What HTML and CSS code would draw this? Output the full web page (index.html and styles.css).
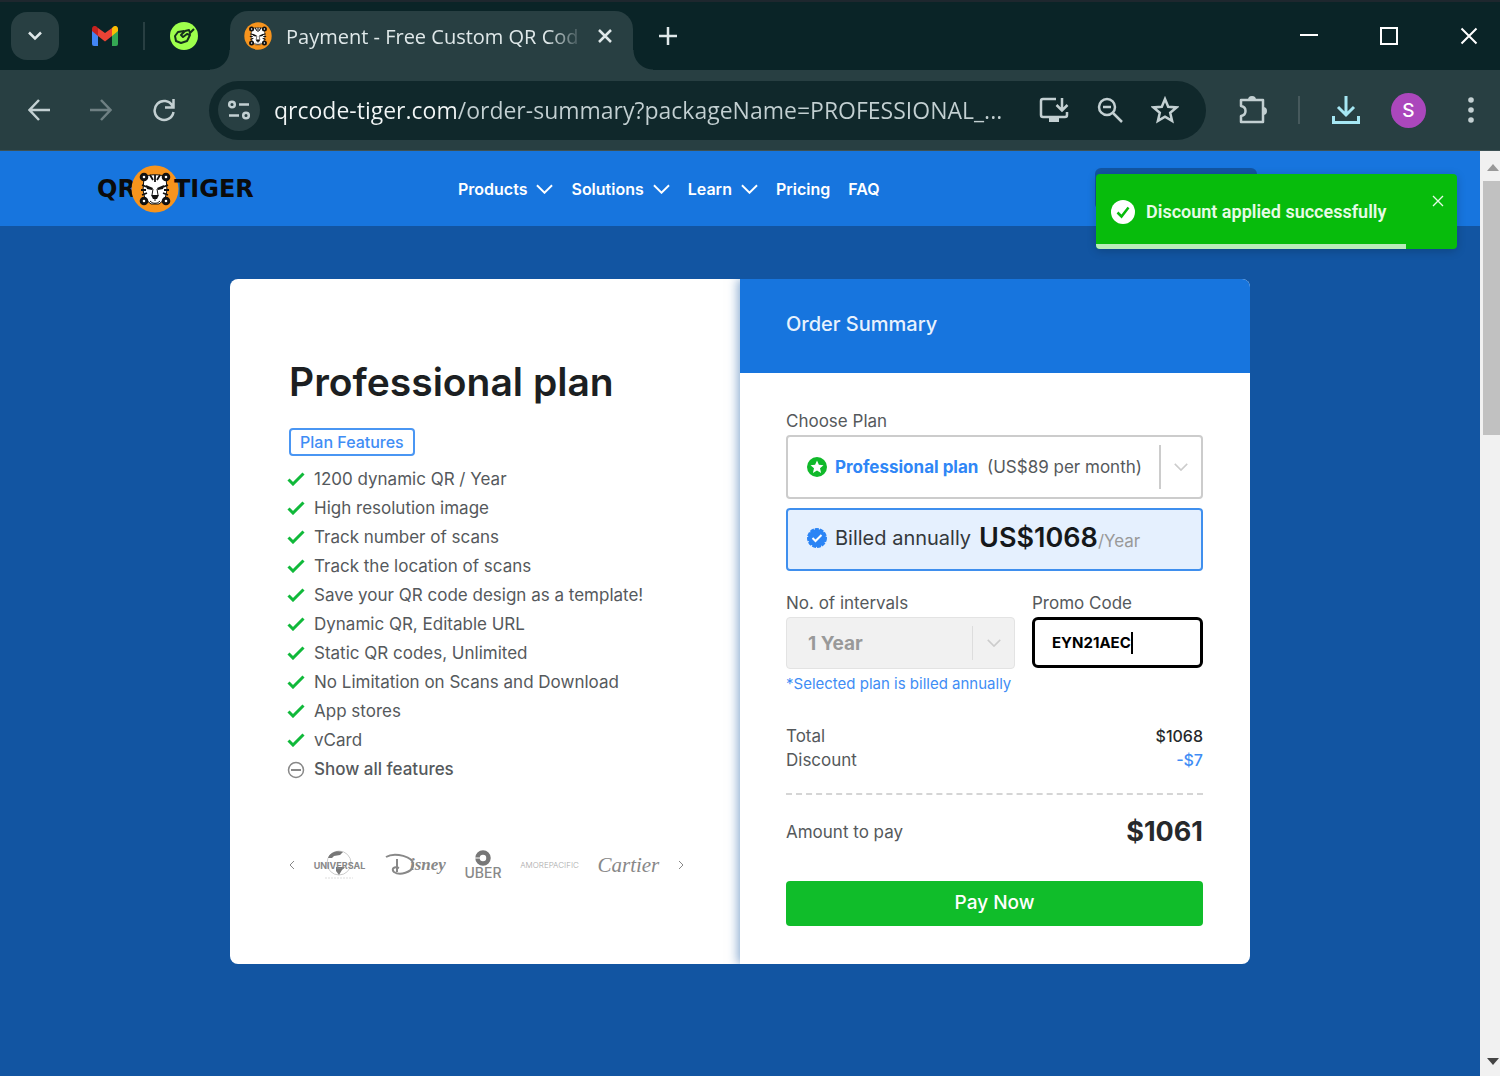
FILE: index.html
```html
<!DOCTYPE html>
<html lang="en">
<head>
    <meta charset="UTF-8">
    <meta name="viewport" content="width=device-width, initial-scale=1.0">
    <title>Payment - Free Custom QR Code</title>
    <link rel="stylesheet" href="styles.css">
</head>
<body>
    <!-- shared icons -->
    <svg class="sprite" aria-hidden="true">
        <symbol id="chevron" viewBox="0 0 18 10"><path d="M1 1l8 8 8-8" fill="none" stroke="currentColor" stroke-width="2"/></symbol>
        <symbol id="check" viewBox="0 0 18 14"><path d="M1.500 7.500l4.500 4.500L16.500 1.500" fill="none" stroke="currentColor" stroke-width="3"/></symbol>
        <symbol id="close" viewBox="0 0 18 18"><path d="M1.500 1.500l15 15M16.500 1.500l-15 15" fill="none" stroke="currentColor" stroke-width="2"/></symbol>
        <symbol id="tiger" viewBox="0 0 48 48">
            <circle cx="24" cy="24" r="23.500" fill="#f7941d"/>
            <path d="M13 12c5-3 17-3 22 0l1 13-2 9-6 5h-8l-6-5-2-9z" fill="#fff" stroke="#111"/>
            <path d="M11 20l5 2M10 25l5 0M11 30l5-2M37 20l-5 2M38 25l-5 0M37 30l-5-2M19 10l3 5M29 10l-3 5M24 10v7" stroke="#111" stroke-width="1.800" fill="none"/>
            <path d="M15 20l7 3-1 2-5-1zM33 20l-7 3 1 2 5-1zM20 30h8l-2 4h-4z" fill="#111"/>
            <path d="M22 24l-1 6M26 24l1 6M24 33v3M19 36c3 3 7 3 10 0" stroke="#111" fill="none"/>
            <g fill="#fff" stroke="#111" stroke-width="3"><circle cx="13" cy="12" r="2.800"/><circle cx="35" cy="12" r="2.800"/><circle cx="13" cy="36" r="2.800"/><circle cx="35" cy="36" r="2.800"/></g>
        </symbol>
    </svg>

    <div class="browser">
        <div class="tabstrip">
            <button class="tab-search" aria-label="Search tabs"><svg width="16" height="10" viewBox="0 0 16 10"><path d="M2 1.500l6 6 6-6" fill="none" stroke="currentColor" stroke-width="2.500"/></svg></button>
            <button class="pinned gmail" aria-label="Gmail">
                <svg width="26" height="20" viewBox="0 0 26 20">
                    <path d="M0 3v15a2 2 0 0 0 2 2h4V8z" fill="#4285f4"/>
                    <path d="M26 3v15a2 2 0 0 1-2 2h-4V8z" fill="#34a853"/>
                    <path d="M20 2v8l6-5V3c0-3-3-4-5-2z" fill="#fbbc04"/>
                    <path d="M6 2v8L0 5V3c0-3 3-4 5-2z" fill="#c5221f"/>
                    <path d="M6 2l7 5 7-5v8l-7 5.500L6 10z" fill="#ea4335"/>
                </svg>
            </button>
            <span class="strip-line"></span>
            <button class="pinned" aria-label="Pinned tab">
                <svg width="28" height="28" viewBox="0 0 28 28">
                    <circle cx="14" cy="14" r="14" fill="#9eff4c"/>
                    <path d="M14 9l-6 1-3 4 1 5 5 2 6-2 3-6-3-1-4 3-2-2 4-4 4-1 1 3 4-4" fill="none" stroke="#14301c" stroke-width="2" stroke-linejoin="round"/>
                </svg>
            </button>
            <div class="tab">
                <svg width="28" height="28"><use href="#tiger"/></svg>
                <span class="tab-title">Payment - Free Custom QR Cod</span>
                <button class="tab-close" aria-label="Close tab"><svg width="14" height="14" viewBox="0 0 14 14"><path d="M1 1l12 12M13 1L1 13" stroke="currentColor" stroke-width="2.500"/></svg></button>
            </div>
            <button class="new-tab" aria-label="New tab"><svg width="18" height="18" viewBox="0 0 18 18"><path d="M9 0v18M0 9h18" stroke="currentColor" stroke-width="2.500"/></svg></button>
            <div class="window-buttons">
                <button aria-label="Minimize"><svg width="18" height="18" viewBox="0 0 18 18"><path d="M0 8h18" stroke="currentColor" stroke-width="2"/></svg></button>
                <button aria-label="Maximize"><svg width="18" height="18" viewBox="0 0 18 18"><path d="M1 1h16v16H1z" fill="none" stroke="currentColor" stroke-width="2"/></svg></button>
                <button aria-label="Close"><svg width="18" height="18"><use href="#close"/></svg></button>
            </div>
        </div>

        <div class="toolbar">
            <button aria-label="Back"><svg width="22" height="22" viewBox="0 0 22 22"><path d="M22 11H2M11 1L1.500 11l9.500 10" fill="none" stroke="currentColor" stroke-width="2.500"/></svg></button>
            <button class="dim" aria-label="Forward"><svg width="22" height="22" viewBox="0 0 22 22"><path d="M0 11h20M11 1l9.500 10-9.500 10" fill="none" stroke="currentColor" stroke-width="2.500"/></svg></button>
            <button aria-label="Reload"><svg width="24" height="24" viewBox="0 0 24 24"><path d="M20.500 8A9.500 9.500 0 1 0 21.500 14M21.500 1v8.500H13" fill="none" stroke="currentColor" stroke-width="2.500"/></svg></button>
            <div class="address">
                <button class="site-info" aria-label="Site information">
                    <svg width="22" height="20" viewBox="0 0 22 20" fill="none" stroke="currentColor" stroke-width="2.500"><circle cx="4" cy="4.500" r="2.800"/><path d="M11 4.500h10M1 15.500h10"/><circle cx="18" cy="15.500" r="2.800"/></svg>
                </button>
                <input type="text" class="url" aria-label="Address" value="qrcode-tiger.com/order-summary?packageName=PROFESSIONAL_...">
                <button aria-label="Install"><svg width="30" height="26" viewBox="0 0 30 26"><path d="M17 2H4a2 2 0 0 0-2 2v14a2 2 0 0 0 2 2h22a2 2 0 0 0 2-2v-3M23 1v11M17.500 8l5.500 5.500L28.500 8" fill="none" stroke="currentColor" stroke-width="2.500"/><path d="M10 20h10v5H10z" fill="currentColor"/></svg></button>
                <button aria-label="Zoom"><svg width="26" height="26" viewBox="0 0 26 26" fill="none" stroke="currentColor" stroke-width="2.500"><circle cx="10" cy="10" r="8"/><path d="M16 16l9 9M6 10h8"/></svg></button>
                <button aria-label="Bookmark"><svg width="28" height="28" viewBox="0 0 28 28"><path d="M14 3l3.200 7.700 8.300.7-6.300 5.400 1.900 8.100-7.100-4.300-7.100 4.300 1.900-8.100-6.300-5.400 8.300-.7z" fill="none" stroke="currentColor" stroke-width="2.500"/></svg></button>
            </div>
            <button aria-label="Extensions"><svg width="30" height="30" viewBox="0 0 30 30"><path d="M3 5h22v22H3v-6c6-1 6-9 0-10z" fill="none" stroke="currentColor" stroke-width="2.500" stroke-linejoin="round"/><path d="M10 5a4 4 0 0 1 8 0zM25 12a4 4 0 0 1 0 8z" fill="currentColor"/></svg></button>
            <span class="bar-line"></span>
            <button class="download" aria-label="Downloads"><svg width="28" height="28" viewBox="0 0 28 28"><path d="M14 0v18M6 11l8 8 8-8M1.500 20v6.500h25V20" fill="none" stroke="currentColor" stroke-width="3"/></svg></button>
            <button class="avatar" aria-label="Profile">S</button>
            <button aria-label="Menu"><svg width="6" height="26" viewBox="0 0 6 26" fill="currentColor"><circle cx="3" cy="3" r="2.800"/><circle cx="3" cy="13" r="2.800"/><circle cx="3" cy="23" r="2.800"/></svg></button>
        </div>

        <div class="viewport">
            <div class="page">
                <header class="site-header">
                    <a class="logo" href="#"><span>QR</span><svg width="48" height="48"><use href="#tiger"/></svg><span>TIGER</span></a>
                    <nav class="menu">
                        <button>Products <svg width="17" height="10"><use href="#chevron"/></svg></button>
                        <button>Solutions <svg width="17" height="10"><use href="#chevron"/></svg></button>
                        <button>Learn <svg width="17" height="10"><use href="#chevron"/></svg></button>
                        <a href="#">Pricing</a>
                        <a href="#">FAQ</a>
                    </nav>
                    <a class="account" href="#" aria-label="My account"></a>
                </header>

                <main class="checkout">
                    <section class="plan">
                        <h1>Professional plan</h1>
                        <span class="badge">Plan Features</span>
                        <ul class="features">
                            <li><svg width="18" height="14"><use href="#check"/></svg>1200 dynamic QR / Year</li>
                            <li><svg width="18" height="14"><use href="#check"/></svg>High resolution image</li>
                            <li><svg width="18" height="14"><use href="#check"/></svg>Track number of scans</li>
                            <li><svg width="18" height="14"><use href="#check"/></svg>Track the location of scans</li>
                            <li><svg width="18" height="14"><use href="#check"/></svg>Save your QR code design as a template!</li>
                            <li><svg width="18" height="14"><use href="#check"/></svg>Dynamic QR, Editable URL</li>
                            <li><svg width="18" height="14"><use href="#check"/></svg>Static QR codes, Unlimited</li>
                            <li><svg width="18" height="14"><use href="#check"/></svg>No Limitation on Scans and Download</li>
                            <li><svg width="18" height="14"><use href="#check"/></svg>App stores</li>
                            <li><svg width="18" height="14"><use href="#check"/></svg>vCard</li>
                        </ul>
                        <button class="show-all">
                            <svg width="18" height="18" viewBox="0 0 18 18" fill="none" stroke="#888"><circle cx="9" cy="9" r="7.500" stroke-width="1.500"/><path d="M4 9h10" stroke-width="2"/></svg>
                            Show all features
                        </button>
                        <div class="brands">
                            <button aria-label="Previous"><svg width="6" height="10" viewBox="0 0 6 10"><path d="M5 1L1 5l4 4" fill="none" stroke="currentColor"/></svg></button>
                            <div class="brand universal">
                                <svg width="34" height="30" viewBox="0 0 34 30"><circle cx="17" cy="13" r="12" fill="none" stroke="#ccc"/><path d="M6 8c2-6 9-8 15-6l-3 3-6 1-2 2zM14 17h9l-3 3-3 5-3-4z" fill="#777"/><path d="M3 28h28" stroke="#ddd" stroke-dasharray="2 1"/></svg>
                                <span>UNIVERSAL</span>
                            </div>
                            <div class="brand disney">
                                <svg width="34" height="26" viewBox="0 0 34 26"><path d="M1 5c8-5 29-1 27 9-1 6-13 10-19 6-3-3 0-6 5-4" fill="none" stroke="#888" stroke-width="2"/><path d="M12 7v13" stroke="#888" stroke-width="2"/></svg>
                                <span>isney</span>
                            </div>
                            <div class="brand uber">
                                <svg width="16" height="16" viewBox="0 0 16 16"><circle cx="8" cy="8" r="5.500" fill="none" stroke="#777" stroke-width="4.500"/><path d="M0 8h5" stroke="#fff" stroke-width="1"/></svg>
                                <span>UBER</span>
                            </div>
                            <div class="brand amore">AMOREPACIFIC</div>
                            <div class="brand cartier">Cartier</div>
                            <button aria-label="Next"><svg width="6" height="10" viewBox="0 0 6 10"><path d="M1 1l4 4-4 4" fill="none" stroke="currentColor"/></svg></button>
                        </div>
                    </section>

                    <section class="order">
                        <h2>Order Summary</h2>
                        <form class="order-form">
                            <label for="plan">Choose Plan</label>
                            <div class="plan-select">
                                <svg width="20" height="20" viewBox="0 0 20 20"><circle cx="10" cy="10" r="10" fill="#10b92a"/><path d="M10 3.500l1.900 4.300 4.600.4-3.500 3.100 1.100 4.600-4.100-2.500-4.100 2.500L7 11.300 3.500 8.200l4.600-.4z" fill="#fff"/></svg>
                                <select id="plan">
                                    <option>Professional plan</option>
                                </select>
                                <span class="price">(US$89 per month)</span>
                                <span class="arrow"><svg width="14" height="8"><use href="#chevron"/></svg></span>
                            </div>
                            <div class="billed">
                                <svg width="20" height="20" viewBox="0 0 20 20"><circle cx="10" cy="10" r="9" fill="#2b84f5" stroke="#2b84f5" stroke-width="2" stroke-dasharray="4 1"/><path d="M5.500 10l3 3 6-6" fill="none" stroke="#fff" stroke-width="2"/></svg>
                                <span>Billed annually</span>
                                <p><strong>US$1068</strong><small>/Year</small></p>
                            </div>

                            <div class="fields">
                                <div>
                                    <label for="intervals">No. of intervals</label>
                                    <div class="interval-select">
                                        <select id="intervals" disabled>
                                            <option>1 Year</option>
                                        </select>
                                        <span class="arrow"><svg width="14" height="8"><use href="#chevron"/></svg></span>
                                    </div>
                                    <p class="hint">*Selected plan is billed annually</p>
                                </div>
                                <div>
                                    <label for="promo">Promo Code</label>
                                    <div class="promo">
                                        <input type="text" id="promo" value="EYN21AEC">
                                        <span class="caret"></span>
                                    </div>
                                </div>
                            </div>

                            <dl class="totals">
                                <div><dt>Total</dt><dd>$1068</dd></div>
                                <div><dt>Discount</dt><dd class="minus">-$7</dd></div>
                                <div class="amount"><dt>Amount to pay</dt><dd>$1061</dd></div>
                            </dl>
                            <button type="button" class="pay">Pay Now</button>
                        </form>
                    </section>
                </main>
            </div>

            <div class="scrollbar">
                <svg width="14" height="8" viewBox="0 0 14 8"><path d="M1 8l6-7 6 7z" fill="#999"/></svg>
                <span class="thumb"></span>
                <svg width="14" height="8" viewBox="0 0 14 8"><path d="M1 0l6 7 6-7z" fill="#444"/></svg>
            </div>

            <div class="toast" role="status">
                <svg width="24" height="24" viewBox="0 0 24 24"><circle cx="12" cy="12" r="12" fill="#fff"/><path d="M6.500 12.500l4 4 7-9" fill="none" stroke="#07bc0c" stroke-width="2.500"/></svg>
                <span>Discount applied successfully</span>
                <button aria-label="Dismiss"><svg width="12" height="12"><use href="#close"/></svg></button>
                <div class="progress"></div>
            </div>
        </div>
    </div>
</body>
</html>
```
FILE: styles.css
```css
* {
    box-sizing: border-box;
}
body {
    margin: 0;
    font-family: Inter, sans-serif;
    font-size: 17px;
    color: #55595c;
}
h1, h2, p, ul, dl, dd {
    margin: 0;
    padding: 0;
}
button, input, select {
    font: inherit;
    color: inherit;
    background: none;
    border: 0;
    padding: 0;
    outline: none;
}
select {
    appearance: none;
    opacity: 1;
}
a {
    color: inherit;
    text-decoration: none;
}
svg {
    display: block;
    flex-shrink: 0;
}
.sprite {
    position: absolute;
    width: 0;
    height: 0;
}
.browser {
    display: flex;
    flex-direction: column;
    min-height: 100vh;
}

/* tab strip */
.tabstrip {
    display: flex;
    align-items: center;
    height: 70px;
    padding-left: 11px;
    background: #0a2427;
    border-top: 2px solid #1e272e;
    color: #dfe8e9;
}
.tab-search {
    display: grid;
    place-items: center;
    width: 48px;
    height: 48px;
    border-radius: 16px;
    background: #283f42;
}
.pinned {
    margin: 0 25px;
}
.gmail {
    margin-left: 33px;
}
.strip-line {
    width: 2px;
    height: 28px;
    background: #283f42;
}
.tab {
    position: relative;
    align-self: flex-end;
    display: flex;
    align-items: center;
    gap: 14px;
    width: 403px;
    height: 59px;
    margin-left: 7px;
    padding: 0 21px 9px 14px;
    border-radius: 18px 18px 0 0;
    background: #283f42;
}
/* curved feet of the active tab */
.tab::before, .tab::after {
    content: "";
    position: absolute;
    bottom: 0;
    width: 20px;
    height: 20px;
    background: radial-gradient(circle at 0 0, transparent 19px, #283f42 20px);
}
.tab::before {
    right: 100%;
}
.tab::after {
    left: 100%;
    background: radial-gradient(circle at 100% 0, transparent 19px, #283f42 20px);
}
.tab-title {
    flex: 1;
    white-space: nowrap;
    font-family: "Open Sans", sans-serif;
    font-size: 20px;
    mask-image: linear-gradient(to right, #000 88%, transparent);
}
.new-tab {
    margin-left: 26px;
}
.window-buttons {
    display: flex;
    gap: 62px;
    margin-left: auto;
    padding-right: 22px;
    color: #fff;
}

/* toolbar */
.toolbar {
    display: flex;
    align-items: center;
    height: 81px;
    padding: 0 26px 0 28px;
    background: #283f42;
    border-bottom: 1px solid #3d5154;
    color: #c3d0d2;
}
.toolbar > button {
    margin-right: 40px;
}
.toolbar > .dim {
    color: #6f8083;
}
.toolbar .address {
    flex: 1;
    display: flex;
    align-items: center;
    gap: 28px;
    height: 59px;
    margin: 0 32px 0 -7px;
    padding: 0 27px 0 9px;
    border-radius: 30px;
    background: #10282b;
}
.site-info {
    display: grid;
    place-items: center;
    flex-shrink: 0;
    width: 42px;
    height: 42px;
    border-radius: 50%;
    background: #283f42;
}
.url {
    flex: 1;
    min-width: 0;
    margin-left: -14px;
    font-family: "Open Sans", sans-serif;
    font-size: 23px;
    color: transparent;
    background: linear-gradient(to right, #f2f6f6 182px, #c3d0d2 182px);
    background-clip: text;
}
.toolbar > button:nth-of-type(4) {
    margin-right: 30px;
}
.bar-line {
    width: 2px;
    height: 28px;
    margin-right: 32px;
    background: #46595c;
}
.toolbar > .download {
    margin-right: 31px;
    color: #a6e7f3;
}
.toolbar > .avatar {
    width: 35px;
    height: 35px;
    margin-right: 42px;
    border-radius: 50%;
    background: #ab47bc;
    color: #fff;
    font-size: 19px;
    font-weight: 500;
}
.toolbar > button:last-child {
    margin-right: 0;
}

/* page */
.viewport {
    position: relative;
    flex: 1;
    display: flex;
}
.page {
    flex: 1;
    background: #1255a2;
}
.site-header {
    display: flex;
    align-items: center;
    height: 75px;
    padding: 0 223px 0 97px;
    background: #1775de;
    color: #fff;
}
.logo {
    display: flex;
    align-items: center;
    width: 361px;
    font-family: "DejaVu Sans", sans-serif;
    font-size: 24px;
    font-weight: 700;
    color: #0b0b0b;
}
.logo svg {
    margin: 0 -5px;
}
.menu {
    display: flex;
    gap: 18px;
    font-size: 16px;
    font-weight: 600;
}
.menu button {
    display: flex;
    align-items: center;
    gap: 9px;
}
.account {
    width: 162px;
    height: 42px;
    margin-left: auto;
    border-radius: 6px;
    background: #1255a2;
}
.toast {
    position: absolute;
    top: 23px;
    right: 43px;
    display: flex;
    align-items: center;
    gap: 11px;
    width: 361px;
    height: 75px;
    padding: 0 13px 0 15px;
    border-radius: 4px;
    background: #07bc0c;
    box-shadow: 0 2px 10px rgba(0,0,0,0.2);
    color: #e6fbe6;
    font-family: Roboto, sans-serif;
    font-size: 18px;
    font-weight: 600;
    overflow: hidden;
}
.toast button {
    align-self: flex-start;
    margin: 21px 0 0 auto;
}
.progress {
    position: absolute;
    left: 0;
    bottom: 0;
    width: 86%;
    height: 5px;
    background: #b9ecba;
}
.scrollbar {
    display: flex;
    flex-direction: column;
    align-items: flex-end;
    width: 20px;
    padding: 12px 0 10px;
    background: #f1f1f1;
}
.thumb {
    width: 17px;
    height: 254px;
    margin: 10px 0 auto;
    background: #c1c1c1;
}

/* checkout card */
.checkout {
    display: grid;
    grid-template-columns: 1fr 1fr;
    max-width: 1020px;
    margin: 53px auto;
    border-radius: 8px;
    background: #fff;
    overflow: hidden;
}
.plan {
    padding: 74px 56px 0 59px;
}
.plan h1 {
    font-size: 39px;
    line-height: 58px;
    font-weight: 600;
    color: #1c1f22;
}
.badge {
    display: inline-block;
    margin-top: 17px;
    padding: 0 9px;
    border: 2px solid #4a96f3;
    border-radius: 4px;
    line-height: 24px;
    font-size: 16px;
    font-weight: 500;
    color: #3f8df5;
}
.features {
    margin-top: 9px;
    list-style: none;
}
.features li, .show-all {
    display: flex;
    align-items: center;
    gap: 9px;
    margin-left: -2px;
    line-height: 29px;
}
.features svg {
    margin-bottom: 2px;
    color: #10b93a;
}
.show-all {
    font-size: 17px;
    font-weight: 500;
}
.brands {
    display: flex;
    align-items: center;
    justify-content: space-between;
    height: 36px;
    margin-top: 63px;
    color: #888;
}
.brand {
    display: grid;
    place-items: center;
}
.universal > *, .disney > * {
    grid-area: 1 / 1;
}
.universal span {
    font-size: 9px;
    font-weight: 700;
}
.disney span {
    margin-left: 26px;
    font-family: "Liberation Serif", serif;
    font-size: 17px;
    font-style: italic;
    font-weight: 700;
}
.disney svg {
    margin-right: 26px;
}
.uber span {
    font-size: 14px;
    line-height: 14px;
    font-weight: 500;
}
.amore {
    font-size: 8px;
    font-weight: 300;
    color: #aaa;
}
.cartier {
    font-family: "Liberation Serif", serif;
    font-size: 21px;
    font-style: italic;
}

.order {
    box-shadow: -2px 0 10px rgba(18,85,162,0.5);
}
.order h2 {
    height: 94px;
    padding: 0 46px;
    line-height: 90px;
    font-size: 20px;
    font-weight: 500;
    color: #e8f2fd;
    background: #1775de;
}
.order-form {
    padding: 36px 47px 38px 46px;
}
.order-form label {
    display: block;
    margin-bottom: 2px;
    line-height: 24px;
}
.plan-select, .billed {
    display: flex;
    align-items: center;
    gap: 8px;
    height: 64px;
    padding-left: 19px;
    border: 2px solid #ccc;
    border-radius: 4px;
}
.plan-select select {
    font-weight: 700;
    color: #2f86f6;
}
.arrow {
    display: grid;
    place-items: center;
    height: 44px;
    width: 42px;
    margin-left: auto;
    border-left: 2px solid #ccc;
    color: #ccc;
}
.billed {
    height: 63px;
    margin-top: 9px;
    padding-bottom: 4px;
    border-color: #3f8fee;
    background: #e5f0fe;
    font-size: 20px;
    color: #33383c;
}
.billed strong {
    font-size: 27px;
    font-weight: 600;
    color: #15181b;
}
.billed small {
    font-size: 17px;
    color: #999;
}
.fields {
    display: grid;
    grid-template-columns: 229px 1fr;
    gap: 17px;
    margin-top: 20px;
}
.interval-select {
    display: flex;
    align-items: center;
    height: 52px;
    padding-left: 21px;
    border: 1px solid #e3e3e3;
    border-radius: 4px;
    background: #f1f1f1;
    font-size: 19px;
    font-weight: 700;
    color: #999;
}
.interval-select select {
    opacity: 1;
}
.interval-select .arrow {
    height: 34px;
    border-left: 1px solid #ddd;
}
.promo {
    display: flex;
    align-items: center;
    height: 51px;
    padding-left: 17px;
    border: 3px solid #000;
    border-radius: 6px;
    font-size: 15px;
    font-weight: 700;
    color: #000;
}
.promo input {
    field-sizing: content;
}
.caret {
    width: 2px;
    height: 22px;
    background: #000;
}
.hint {
    font-size: 15px;
    line-height: 30px;
    color: #3f8df5;
}
.totals {
    margin-top: 25px;
}
.totals div {
    display: flex;
    align-items: center;
    justify-content: space-between;
    line-height: 24px;
}
.totals dd {
    font-size: 16px;
    font-weight: 500;
    color: #26292c;
}
.totals .minus {
    color: #3f8df5;
}
.totals .amount {
    margin-top: 21px;
    border-top: 2px dashed #d5d5d5;
    line-height: 74px;
}
.totals .amount dd {
    font-size: 27px;
    font-weight: 700;
}
.pay {
    width: 100%;
    height: 45px;
    margin-top: 12px;
    padding-bottom: 2px;
    border-radius: 4px;
    background: #10bd2a;
    font-size: 19px;
    font-weight: 500;
    color: #fff;
}
```
